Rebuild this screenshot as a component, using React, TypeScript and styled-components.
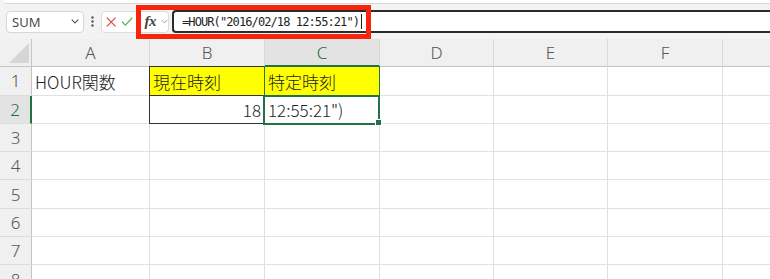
import styled, { createGlobalStyle } from 'styled-components';

const GlobalStyle = createGlobalStyle`
  html, body {
    margin: 0;
    padding: 0;
    background: #ffffff;
  }
  body {
    font-family: "Noto Sans", "Noto Sans CJK JP", sans-serif;
  }
`;

const Screen = styled.div`
  width: 770px;
  height: 279px;
  overflow: hidden;
  background: #f3f3f3;
  display: flex;
  flex-direction: column;
`;

const RibbonEdge = styled.div`
  flex: none;
  height: 3px;
  margin-left: 3px;
  background: #ffffff;
  border-bottom: 1px solid #d8d8d8;
  border-bottom-left-radius: 6px;
`;

const FormulaBar = styled.div`
  flex: none;
  position: relative;
  height: 35px;
  display: flex;
  align-items: center;
  padding-left: 6px;
`;

const NameBox = styled.div`
  box-sizing: border-box;
  width: 78px;
  height: 22px;
  display: flex;
  align-items: center;
  justify-content: space-between;
  padding: 0 4px 0 5px;
  background: #ffffff;
  border: 1px solid #d6d6d6;
  border-radius: 4px;
  font-size: 13px;
  color: #4a4a4a;
`;

const Grip = styled.svg`
  margin-left: 7px;
  flex: none;
`;

const FuncBox = styled.div`
  box-sizing: border-box;
  width: 68px;
  height: 22px;
  margin-left: 7px;
  display: flex;
  align-items: center;
  padding-left: 4px;
  gap: 5px;
  background: #ffffff;
  border: 1px solid #dcdcdc;
  border-radius: 4px;
`;

const Fx = styled.span`
  margin-left: 6px;
  font-family: "Liberation Serif", serif;
  font-style: italic;
  font-weight: bold;
  font-size: 15px;
  color: #444444;
  letter-spacing: -0.5px;
`;

const FormulaInput = styled.div`
  box-sizing: border-box;
  flex: 1;
  height: 23px;
  margin-left: 3px;
  display: flex;
  align-items: center;
  padding-left: 8px;
  background: #ffffff;
  border: 2px solid #2b2b2b;
  border-right: none;
  border-radius: 4px 0 0 4px;
  font-family: "DejaVu Sans Mono", monospace;
  font-size: 12px;
  letter-spacing: -0.9px;
  color: #1e1e1e;
  white-space: pre;
`;

const Caret = styled.span`
  width: 1px;
  height: 15px;
  margin-left: 2px;
  background: #222;
`;

const RedFrame = styled.div`
  position: absolute;
  left: 136px;
  top: 1px;
  width: 235px;
  height: 34px;
  box-sizing: border-box;
  border: 5px solid #f8250c;
  pointer-events: none;
`;

const Sheet = styled.div`
  flex: none;
  display: grid;
  grid-template-columns: 32px 118px 115px 115px 114px 114px 115px 115px;
  grid-auto-rows: 28.3px;
  background: #ffffff;
`;

const Corner = styled.div`
  box-sizing: border-box;
  background: #f0f0f0;
  border-right: 1px solid #c4c4c4;
  border-bottom: 1px solid #c4c4c4;
  display: flex;
  align-items: flex-end;
  justify-content: flex-end;
  padding: 0 2px 3px 0;
`;

const ColHead = styled.div<{ $active?: boolean }>`
  box-sizing: border-box;
  display: flex;
  align-items: center;
  justify-content: center;
  font-size: 17px;
  font-weight: 300;
  color: ${(p) => (p.$active ? '#1d6b40' : '#555555')};
  background: ${(p) => (p.$active ? '#e3e3e3' : '#f0f0f0')};
  border-right: 1px solid #d9d9d9;
  border-bottom: ${(p) => (p.$active ? '2px solid #217346' : '1px solid #c4c4c4')};
`;

const RowHead = styled.div<{ $active?: boolean }>`
  box-sizing: border-box;
  display: flex;
  align-items: center;
  justify-content: center;
  font-size: 17px;
  font-weight: 300;
  color: ${(p) => (p.$active ? '#1d6b40' : '#555555')};
  background: ${(p) => (p.$active ? '#e3e3e3' : '#f0f0f0')};
  border-right: ${(p) => (p.$active ? '2px solid #217346' : '1px solid #c4c4c4')};
  border-bottom: 1px solid #dcdcdc;
`;

type Frame = 'dark' | 'green' | 'active';

const frameCss: Record<Frame, string> = {
  dark: 'inset: -1px -1px -1px -1px; border: 1px solid #333333;',
  green: 'inset: -1px -1px -1px -1px; border: 1px solid #217346;',
  active: 'inset: -1px -1px -2px -2px; border: 2px solid #217346;',
};

const Cell = styled.div<{ $fill?: string; $align?: 'left' | 'right'; $frame?: Frame }>`
  position: relative;
  box-sizing: border-box;
  display: flex;
  align-items: center;
  justify-content: ${(p) => (p.$align === 'right' ? 'flex-end' : 'flex-start')};
  padding: 1px 3px 0 3px;
  background: ${(p) => p.$fill || '#ffffff'};
  border-right: 1px solid #e1e1e1;
  border-bottom: 1px solid #e1e1e1;
  font-family: "Noto Sans CJK JP", sans-serif;
  font-size: 17px;
  font-weight: 300;
  color: #222222;
  white-space: nowrap;

  &::after {
    content: '';
    position: absolute;
    pointer-events: none;
    z-index: 1;
    ${(p) => (p.$frame ? frameCss[p.$frame] : 'display: none;')}
  }
`;

const FillHandle = styled.span`
  position: absolute;
  right: -3px;
  bottom: -3px;
  width: 5px;
  height: 5px;
  background: #217346;
  border: 1px solid #ffffff;
  z-index: 2;
`;

// G sits past the right edge, so its letter is not shown
const columns = ['A', 'B', 'C', 'D', 'E', 'F', 'G'];
const rows = [1, 2, 3, 4, 5, 6, 7, 8];

type CellData = { text?: string; fill?: string; align?: 'left' | 'right'; frame?: Frame };

const cells: Record<string, CellData> = {
  A1: { text: 'HOUR関数' },
  B1: { text: '現在時刻', fill: '#ffff00', frame: 'dark' },
  C1: { text: '特定時刻', fill: '#ffff00', frame: 'green' },
  B2: { text: '18', align: 'right', frame: 'dark' },
  C2: { text: '12:55:21")', frame: 'active' },
};

const Chevron = ({ color = '#666' }: { color?: string }) => (
  <svg width="8" height="5" viewBox="0 0 8 5">
    <path d="M0.7 0.7 L4 4 L7.3 0.7" fill="none" stroke={color} strokeWidth="1.1" />
  </svg>
);

export default function App() {
  return (
    <Screen>
      <GlobalStyle />
      <RibbonEdge />
      <FormulaBar>
        <NameBox>
          SUM
          <Chevron color="#555" />
        </NameBox>
        <Grip width="3" height="11" viewBox="0 0 3 11">
          <circle cx="1.5" cy="1.5" r="1.2" fill="#555" />
          <circle cx="1.5" cy="5.5" r="1.2" fill="#555" />
          <circle cx="1.5" cy="9.5" r="1.2" fill="#555" />
        </Grip>
        <FuncBox>
          <svg width="12" height="12" viewBox="0 0 12 12">
            <path d="M1 1 L11 11 M11 1 L1 11" stroke="#e3463a" strokeWidth="1.4" />
          </svg>
          <svg width="14" height="11" viewBox="0 0 14 11">
            <path d="M1 5.6 L5 9.6 L13 1.2" fill="none" stroke="#5aae5a" strokeWidth="1.4" />
          </svg>
          <Fx>fx</Fx>
          <Chevron color="#999" />
        </FuncBox>
        <FormulaInput>
          =HOUR("2016/02/18 12:55:21")
          <Caret />
        </FormulaInput>
        <RedFrame />
      </FormulaBar>
      <Sheet>
        <Corner>
          <svg width="20" height="20" viewBox="0 0 20 20">
            <path d="M20 0 L20 20 L0 20 Z" fill="#d6d6d6" />
          </svg>
        </Corner>
        {columns.map((c) => (
          <ColHead key={c} $active={c === 'C'}>
            {c === 'G' ? '' : c}
          </ColHead>
        ))}
        {rows.map((r) => [
          <RowHead key={`h${r}`} $active={r === 2}>
            {r}
          </RowHead>,
          ...columns.map((c) => {
            const d = cells[`${c}${r}`] || {};
            return (
              <Cell key={`${c}${r}`} $fill={d.fill} $align={d.align} $frame={d.frame}>
                {d.text}
                {d.frame === 'active' && <FillHandle />}
              </Cell>
            );
          }),
        ])}
      </Sheet>
    </Screen>
  );
}
